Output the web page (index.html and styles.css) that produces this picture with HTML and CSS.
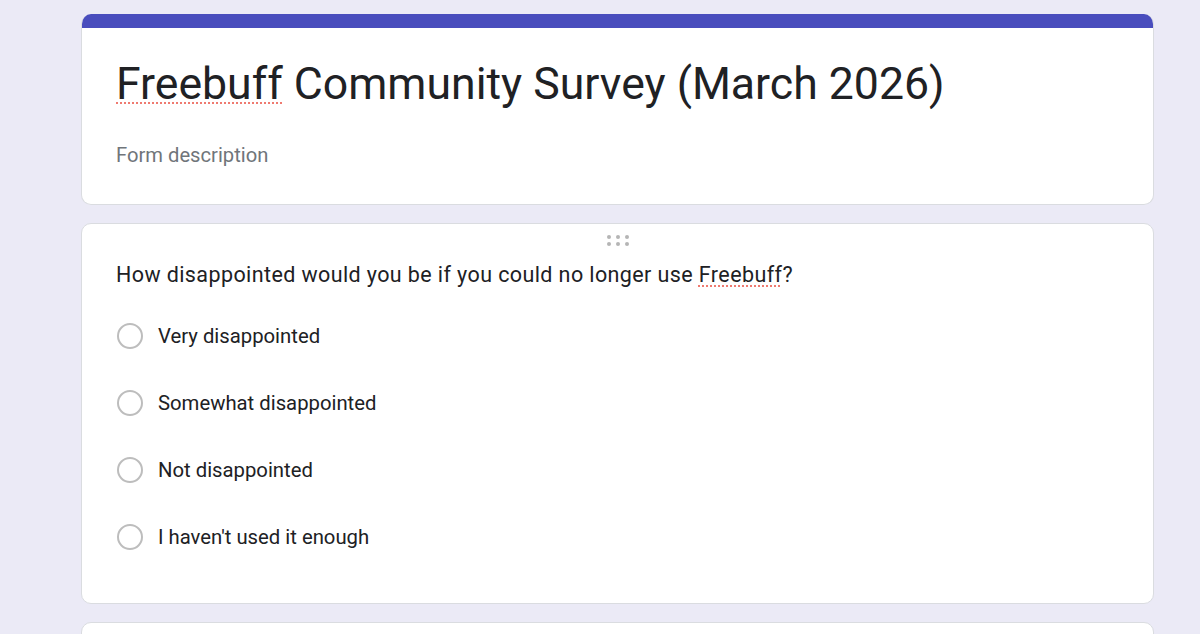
FILE: index.html
```html
<!DOCTYPE html>
<html lang="en">
<head>
<meta charset="utf-8">
<title>Freebuff Community Survey (March 2026)</title>
<link rel="stylesheet" href="styles.css">
</head>
<body>
<main class="form">
  <section class="card header-card">
    <div class="accent"></div>
    <div class="header-body">
      <h1 class="title"><span class="spell">Freebuff</span> Community Survey (March 2026)</h1>
      <p class="description">Form description</p>
    </div>
  </section>

  <section class="card question-card">
    <div class="drag-handle" aria-hidden="true">
      <span></span><span></span><span></span><span></span><span></span><span></span>
    </div>
    <h2 class="question">How disappointed would you be if you could no longer use <span class="spell">Freebuff</span>?</h2>
    <ul class="options">
      <li class="option"><span class="radio"></span><span class="label">Very disappointed</span></li>
      <li class="option"><span class="radio"></span><span class="label">Somewhat disappointed</span></li>
      <li class="option"><span class="radio"></span><span class="label">Not disappointed</span></li>
      <li class="option"><span class="radio"></span><span class="label">I haven't used it enough</span></li>
    </ul>
  </section>

  <section class="card next-card"></section>
</main>
</body>
</html>
```

FILE: styles.css
```css
* { box-sizing: border-box; }

html, body {
  margin: 0;
  padding: 0;
  background: #ebeaf6;
  font-family: Roboto, "Noto Sans", Arial, sans-serif;
  color: #202124;
  overflow: hidden;
  height: 634px;
}

.form {
  display: flex;
  flex-direction: column;
  gap: 18px;
  padding: 14px 46px 0 81px;
}

.card {
  background: #ffffff;
  border: 1px solid #dadce0;
  border-radius: 10px;
  overflow: hidden;
}

.header-card {
  border-top: none;
}

.accent {
  height: 14px;
  background: #494dbd;
}

.header-body {
  padding: 29px 34px 35px 34px;
}

.title {
  margin: 0;
  font-size: 44.6px;
  line-height: 55px;
  font-weight: 400;
  color: #202124;
}

.spell {
  text-decoration-line: underline;
  text-decoration-style: dotted;
  text-decoration-color: #ef7a70;
  text-decoration-thickness: 2px;
  text-underline-offset: 3px;
}

.description {
  margin: 29px 0 0 0;
  font-size: 20.2px;
  line-height: 28px;
  color: #70757a;
}

.question-card {
  padding: 11px 34px 42px 34px;
}

.drag-handle {
  display: grid;
  grid-template-columns: repeat(3, 4px);
  gap: 3px 5px;
  justify-content: center;
  margin-left: -34px;
  margin-right: -34px;
}

.drag-handle span {
  width: 4px;
  height: 4px;
  border-radius: 50%;
  background: #b5b5b5;
}

.question {
  margin: 15px 0 0 0;
  font-size: 21.5px;
  line-height: 28px;
  letter-spacing: 0.4px;
  font-weight: 400;
  color: #202124;
}

.options {
  list-style: none;
  margin: 23px 0 0 0;
  padding: 0;
  display: flex;
  flex-direction: column;
  gap: 19px;
}

.option {
  display: flex;
  align-items: center;
  gap: 15px;
  height: 48px;
}

.radio {
  width: 26px;
  height: 26px;
  border: 2.5px solid #bdbdbd;
  border-radius: 50%;
  flex: none;
  margin-left: 1px;
}

.label {
  font-size: 20.3px;
  line-height: 28px;
  color: #202124;
}

.next-card {
  height: 60px;
}
```
